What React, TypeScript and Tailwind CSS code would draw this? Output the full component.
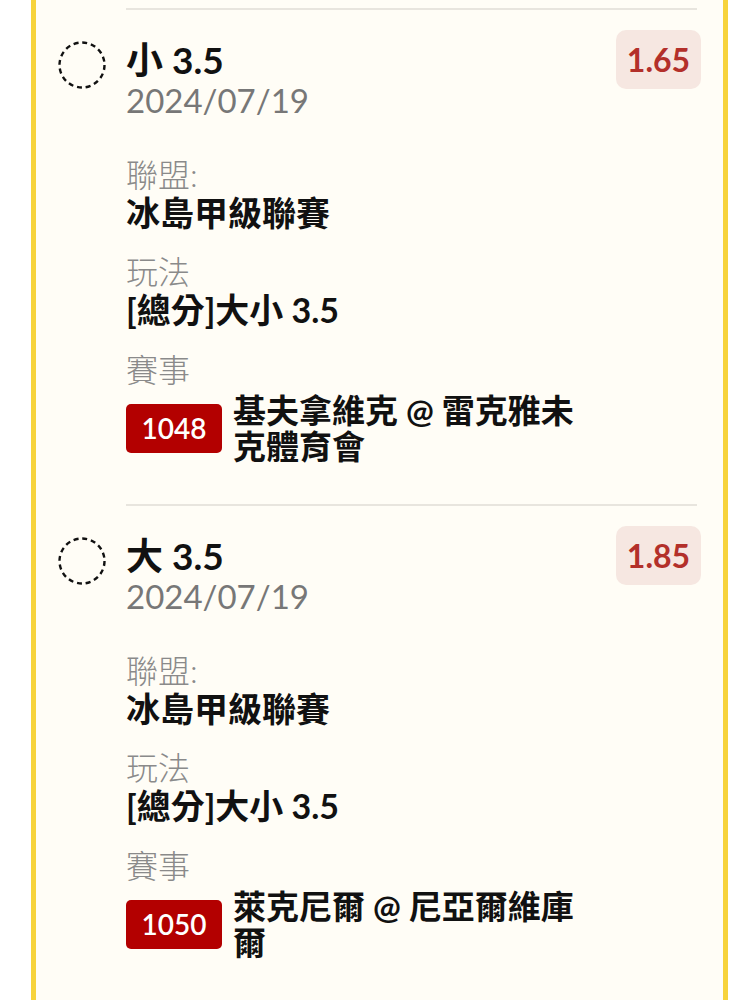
import React from "react";

type Bet = {
  pick: string;
  date: string;
  odds: string;
  league: string;
  market: string;
  code: string;
  match: string;
};

const bets: Bet[] = [
  {
    pick: "小 3.5",
    date: "2024/07/19",
    odds: "1.65",
    league: "冰島甲級聯賽",
    market: "[總分]大小 3.5",
    code: "1048",
    match: "基夫拿維克 @ 雷克雅未克體育會",
  },
  {
    pick: "大 3.5",
    date: "2024/07/19",
    odds: "1.85",
    league: "冰島甲級聯賽",
    market: "[總分]大小 3.5",
    code: "1050",
    match: "萊克尼爾 @ 尼亞爾維庫爾",
  },
];

const font = { fontFamily: 'Lato, "Noto Sans CJK TC", sans-serif' };

const Radio = () => (
  <svg width="48" height="48" viewBox="0 0 48 48">
    <circle
      cx="24"
      cy="24"
      r="22.5"
      fill="none"
      stroke="#111"
      strokeWidth="2.4"
      strokeDasharray="5 3.8"
    />
  </svg>
);

const BetItem = ({ bet }: { bet: Bet }) => {
  return (
    <div className="flex pl-[22px] pr-[26px]">
      <div className="mt-[33px] w-[48px] shrink-0">
        <Radio />
      </div>

      <div className="ml-[20px] flex flex-1 items-start border-t-2 border-[#e8e5de] pt-[20px] pb-[40px]">
        <div className="flex-1 pt-[10px]">
          {/* pick + date */}
          <div className="text-[37px] font-bold leading-[40px] text-[#111]">{bet.pick}</div>
          <div className="text-[33px] leading-[40px] text-[#777]">{bet.date}</div>

          <div className="mt-[36px]">
            <div className="text-[32px] font-light leading-[38px] text-[#8a8a8a]">聯盟:</div>
            <div className="text-[34px] font-bold leading-[38px] text-[#111]">{bet.league}</div>
          </div>

          <div className="mt-[21px]">
            <div className="text-[32px] font-light leading-[38px] text-[#8a8a8a]">玩法</div>
            <div className="text-[34px] font-bold leading-[38px] text-[#111]">{bet.market}</div>
          </div>

          <div className="mt-[22px]">
            <div className="text-[32px] font-light leading-[38px] text-[#8a8a8a]">賽事</div>
            <div className="mt-[3px] flex items-center gap-[11px]">
              <span className="flex h-[49px] w-[96px] shrink-0 items-center justify-center rounded-[5px] bg-[#b30000] text-[28px] font-semibold leading-none text-white">
                {bet.code}
              </span>
              <span className="text-[33px] font-bold leading-[36px] text-[#111]">{bet.match}</span>
            </div>
          </div>
        </div>

        <div className="-mr-[4px] ml-[16px] flex h-[59px] w-[85px] shrink-0 items-center justify-center rounded-[10px] bg-[#f6e7e1] text-[32px] font-bold text-[#b3302a]">
          {bet.odds}
        </div>
      </div>
    </div>
  );
};

export default function App() {
  return (
    <div className="min-h-screen bg-white" style={font}>
      <div className="ml-[31px] min-h-screen w-[697px] border-x-[5px] border-[#f7d33c] bg-[#fffdf6] pt-[8px]">
        {bets.map((b) => (
          <BetItem key={b.code} bet={b} />
        ))}
        <div className="ml-[90px] mr-[26px] border-t-2 border-[#e8e5de]" />
      </div>
    </div>
  );
}
